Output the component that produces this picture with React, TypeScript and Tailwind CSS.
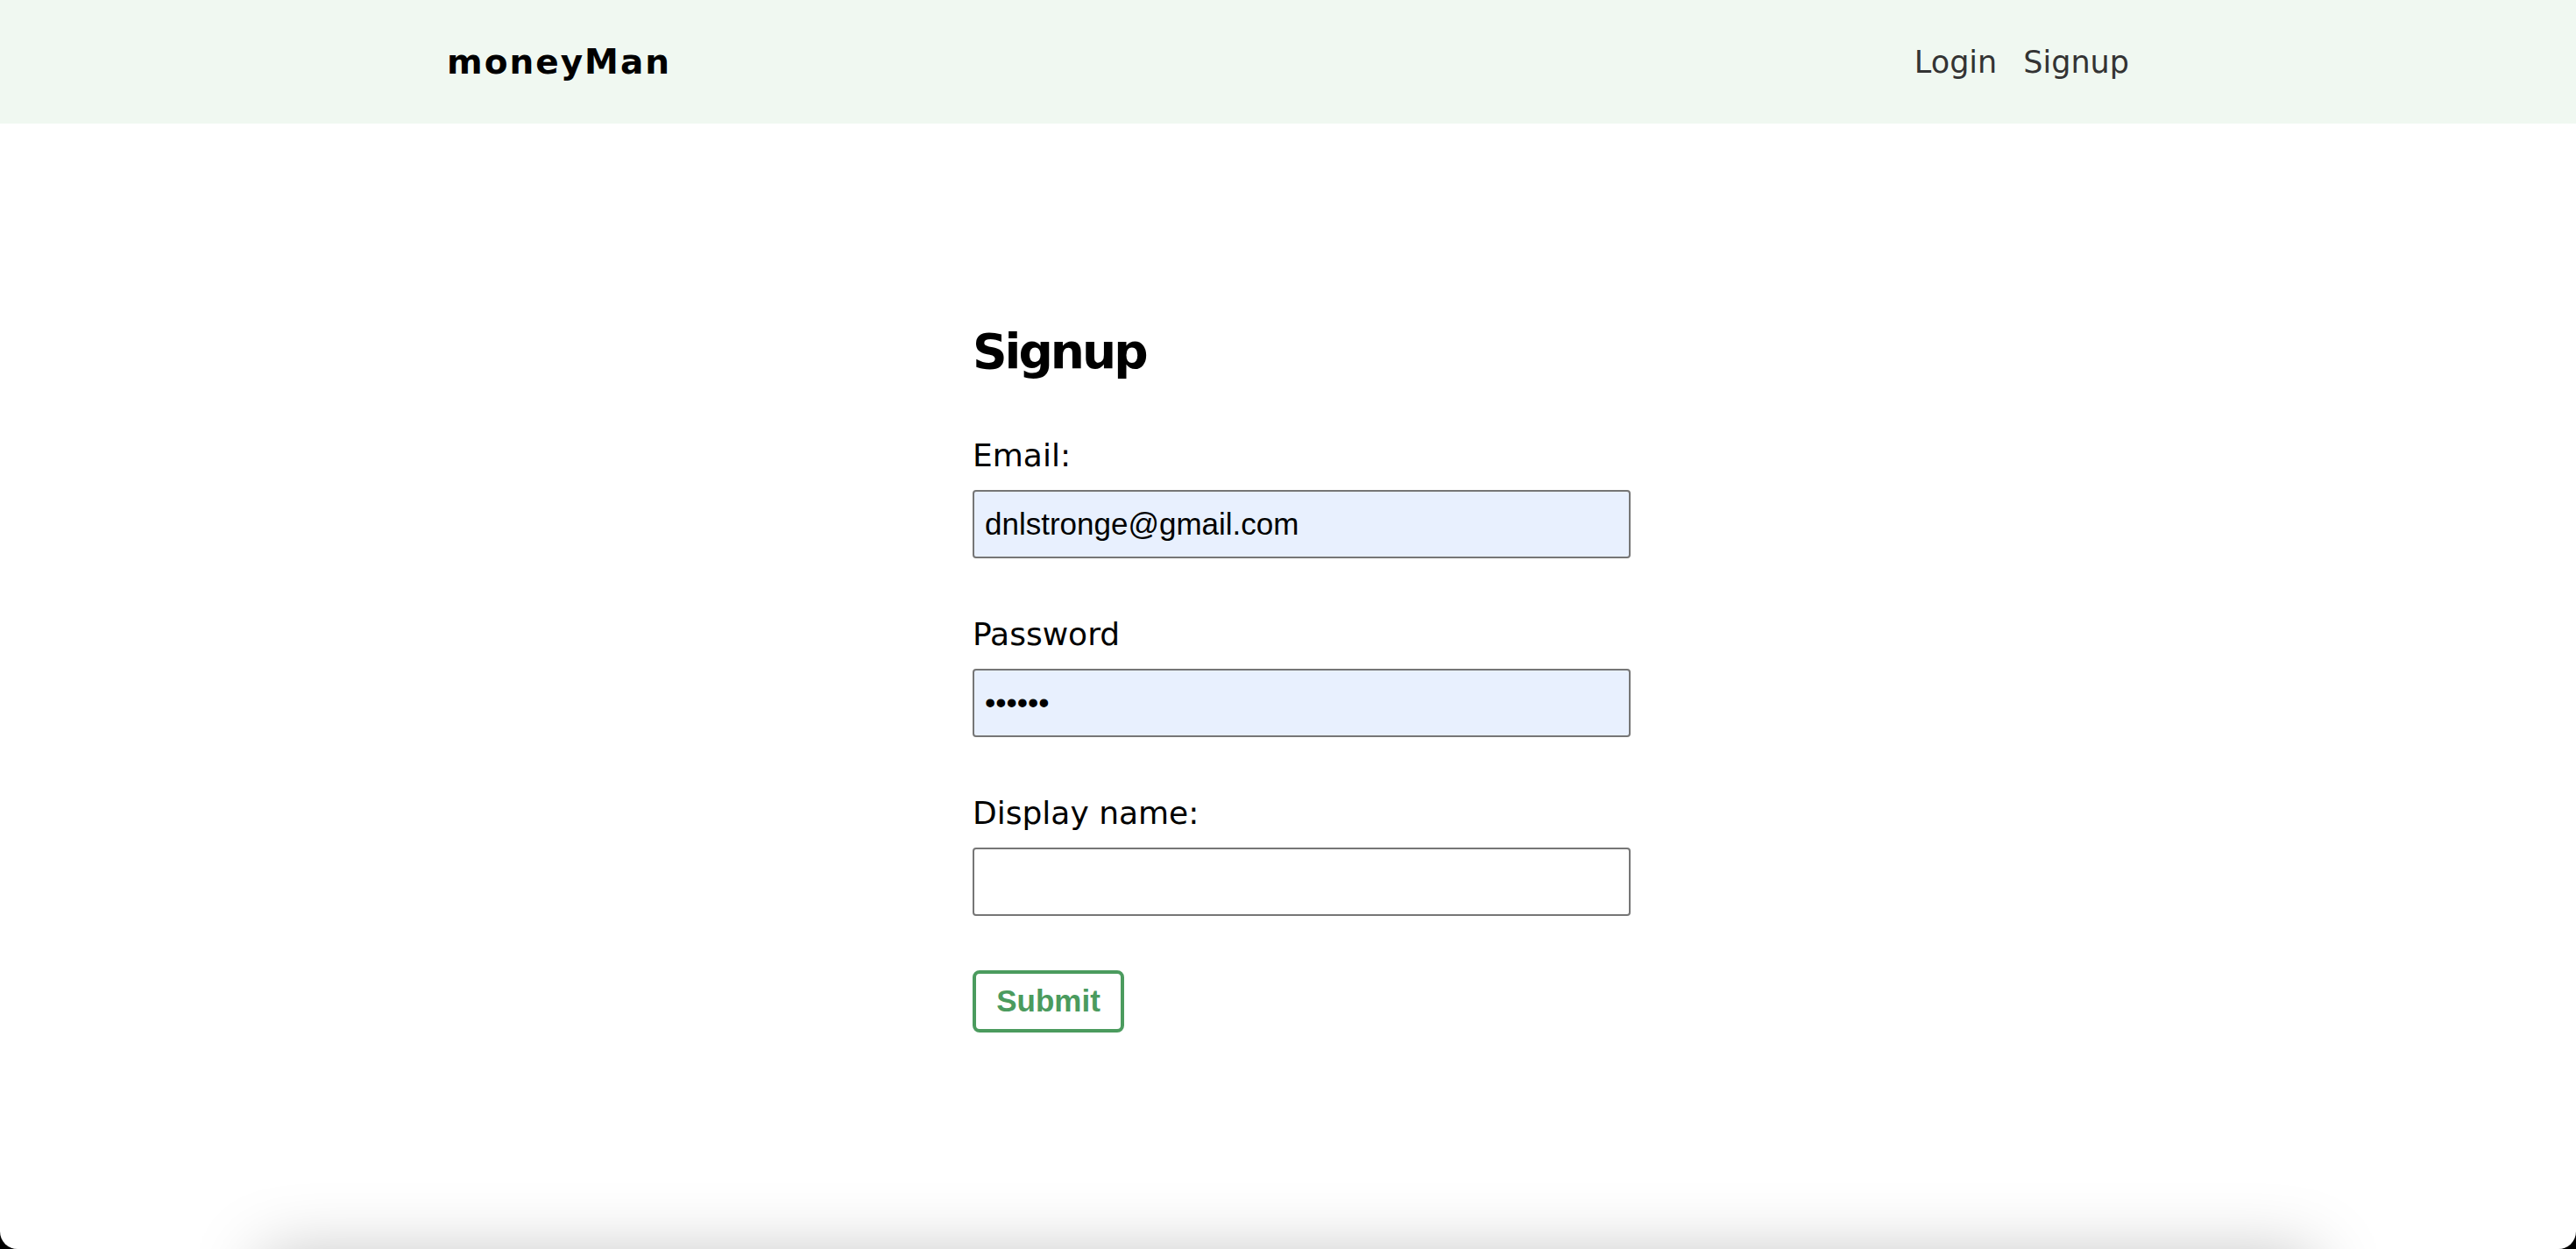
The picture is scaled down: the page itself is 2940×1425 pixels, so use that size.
import { useState } from 'react';

const poppinsLike = "font-['DejaVu_Sans',sans-serif]";

export default function App() {
  const [email, setEmail] = useState('dnlstronge@gmail.com');
  const [password, setPassword] = useState('123456');
  const [displayName, setDisplayName] = useState('');

  return (
    <div className="h-[1425px] bg-black overflow-hidden">
      <div className="h-full bg-white rounded-b-[20px] overflow-hidden flex flex-col">
        <nav className="h-[141px] shrink-0 bg-[#f0f8f1]">
          <div className="w-[1920px] h-full mx-auto flex items-center justify-between">
            <h1 className={`${poppinsLike} text-[39px] font-bold tracking-[2px] text-black pt-[2px]`}>moneyMan</h1>
            <ul className={`${poppinsLike} flex gap-[30px] text-[35px] text-[#333] pt-[2px]`}>
              <li>Login</li>
              <li>Signup</li>
            </ul>
          </div>
        </nav>

        <main className="w-[784px] mx-auto pl-[32px] pt-[224px] shrink-0">
          <form className="w-[752px]" onSubmit={(e) => e.preventDefault()}>
            <h2 className={`${poppinsLike} text-[55px] leading-[72px] font-bold tracking-[-3px] text-black`}>Signup</h2>

            <label className="block mt-[59px]">
              <span className={`${poppinsLike} block text-[36px] leading-[48px] mb-[15px] text-black`}>Email:</span>
              <input
                type="email"
                value={email}
                onChange={(e) => setEmail(e.target.value)}
                className="block w-[751px] h-[78px] px-[12px] border-2 border-[#767676] rounded-[4px] bg-[#e8f0fe] font-['Liberation_Sans',Arial,sans-serif] text-[35px] text-black outline-none"
              />
            </label>

            <label className="block mt-[63px]">
              <span className={`${poppinsLike} block text-[36px] leading-[48px] mb-[15px] text-black`}>Password</span>
              <input
                type="password"
                value={password}
                onChange={(e) => setPassword(e.target.value)}
                className="block w-[751px] h-[78px] px-[12px] border-2 border-[#767676] rounded-[4px] bg-[#e8f0fe] font-['Liberation_Sans',Arial,sans-serif] text-[35px] text-black outline-none"
              />
            </label>

            <label className="block mt-[63px]">
              <span className={`${poppinsLike} block text-[36px] leading-[48px] mb-[15px] text-black`}>Display name:</span>
              <input
                type="text"
                value={displayName}
                onChange={(e) => setDisplayName(e.target.value)}
                className="block w-[751px] h-[78px] px-[12px] border-2 border-[#767676] rounded-[4px] bg-white font-['Liberation_Sans',Arial,sans-serif] text-[35px] text-black outline-none"
              />
            </label>

            <button
              type="submit"
              className="mt-[62px] w-[173px] h-[71px] border-4 border-[#4b9b5e] rounded-[8px] bg-white font-['Liberation_Sans',Arial,sans-serif] font-bold text-[35px] text-[#4b9b5e]"
            >
              Submit
            </button>
          </form>
        </main>

        <div className="flex-1" />
        <div className="w-[2340px] h-[100px] mx-auto mb-[-108px] shrink-0 bg-white shadow-[0_0_80px_rgba(0,0,0,0.25)]" />
      </div>
    </div>
  );
}
